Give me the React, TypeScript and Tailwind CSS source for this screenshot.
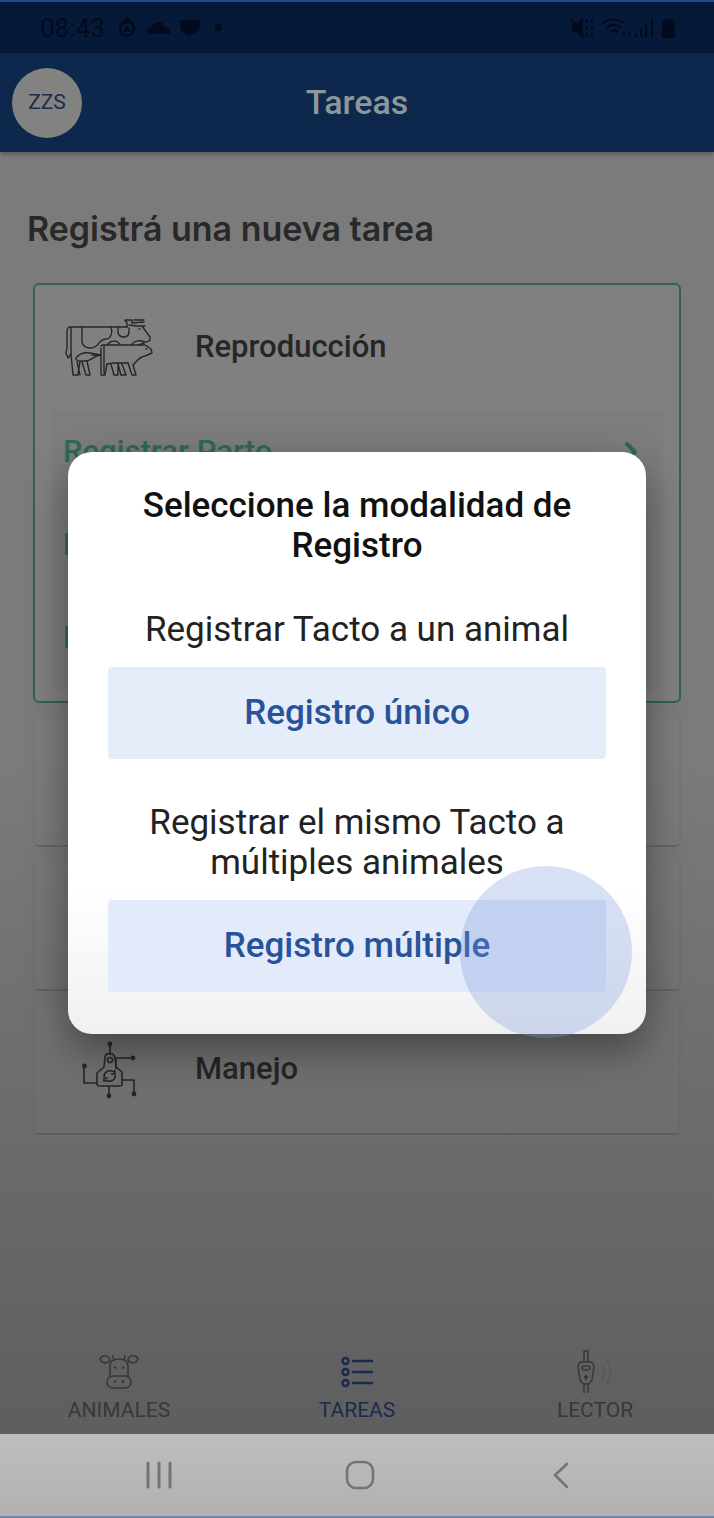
import type { ReactNode } from "react";
import { ChevronRight } from "lucide-react";

function CowIcon() {
  return (
    <svg viewBox="0 0 90 60" className="h-[60px] w-[90px]" fill="none" stroke="currentColor" strokeWidth="1.4" strokeLinejoin="round" strokeLinecap="round">
      <path d="M62 9H6c-3 0-4 1-4 4v17l-1 5 2 5 3-4V10" />
      <path d="M6 36l2 21h5l2-14M17 44l4 13h4l-3-14M12 44l3 13" />
      <path d="M17 9v8c0 5-2 12 8 13 10 0 7-8 16-9 5 0 7-7 5-12" />
      <path d="M11 40c3-4 8-6 14-5l10 2c-7 1-8 6-15 6-5 0-9 1-9-3z" />
      <path d="M53 9c0 5-1 9 5 10 7 0 6-5 6-9M62 9v-4l-2-3h7v3l12-1M64 7l8 1h8M69 2h10M77 8l5 7 3 4c1 4-2 5-5 5-6-2-10-2-14 3M74 11h1" />
      <path d="M43 26c3-4 10-4 12 1M36 30V57h4l2-11M39 28v27M36 28c0-1 1-1 3-1h41l6 4 1 4-7 3c-6 1-7 4-12 9l3 10h-4l-4-12M35 37h-8" />
      <path d="M42 46l7-1h14M46 46l3 11h4V47M53 46l3 11h5l-4-11M74 27l5-2M81 31h1" />
    </svg>
  );
}

function TagIcon() {
  return (
    <svg viewBox="0 0 56 58" className="h-[58px] w-[56px]" fill="none" stroke="currentColor" strokeWidth="1.6" strokeLinejoin="round">
      <path d="M15 43V32l7-6 1-9c0-6 9-6 10 0l1 9 6 5v12c0 2-1 2-3 2H18c-2 0-3 0-3-2z" />
      <circle cx="28" cy="19" r="2.5" />
      <path d="M28 14V3M27 45v9M15 42H2V26M34 28V17h15M40 39h12v14" />
      <path d="M22 36c0-5 5-8 10-5M33 29v4h-4M33 34c1 5-5 8-10 5M22 41v-4h4" />
      <g fill="currentColor" stroke="none">
        <circle cx="28" cy="3" r="2.4" />
        <circle cx="27" cy="55" r="2.4" />
        <circle cx="2.5" cy="25" r="2.4" />
        <circle cx="51" cy="17" r="2.4" />
        <circle cx="52" cy="53" r="2.4" />
      </g>
    </svg>
  );
}

function CowHeadIcon() {
  return (
    <svg viewBox="0 0 40 36" className="h-9 w-10" fill="none" stroke="currentColor" strokeWidth="1.6">
      <path d="M11 23V12c0-5 3-7 9-7s9 2 9 7v11" />
      <rect x="8" y="22" width="24" height="12" rx="6" />
      <path d="M15 6c-1-1-1-3-1-5M25 6c1-1 1-3 1-5" />
      <path d="M11 6C10 1 3 0 1 5c2 5 8 5 10 1zM29 6c1-5 8-6 10-1-2 5-8 5-10 1z" />
      <g fill="currentColor" stroke="none">
        <circle cx="16" cy="13.500" r="1.3" />
        <circle cx="24" cy="13.500" r="1.3" />
        <circle cx="16" cy="27.500" r="1.3" />
        <circle cx="24" cy="27.500" r="1.3" />
      </g>
    </svg>
  );
}

function TasksIcon() {
  return (
    <svg viewBox="0 0 40 36" className="h-9 w-10" fill="none" stroke="currentColor" strokeWidth="2.4">
      {[7, 18, 29].map((y) => (
        <g key={y}>
          <circle cx="8.500" cy={y} r="3" />
          <path d={`M16 ${y}h19`} strokeLinecap="round" />
        </g>
      ))}
    </svg>
  );
}

function ReaderIcon() {
  return (
    <svg viewBox="0 0 40 44" className="h-11 w-10" fill="none" stroke="currentColor" strokeWidth="1.5">
      <path d="M9 12V1h4v11M9 33v10M13 33v10M5 12h12l2 4-2 14-3 4H8l-3-4-2-14z" strokeLinejoin="round" />
      <rect x="7" y="16" width="8" height="4" rx="2" />
      <path d="M9 27h4M11 25v5" strokeWidth="2" />
      <path d="M23 20v5M27 14c3 4 3 12 0 17M31 10c6 7 6 18 0 25" opacity="0.18" />
    </svg>
  );
}

function StatusBar() {
  return (
    <div className="flex h-[53px] items-center justify-between border-t-2 border-[#1b4d8f] bg-[#061938] pr-9 pl-10 text-[#020b1e]">
      <div className="flex items-center gap-2">
        <span className="text-[26px] leading-8">08:43</span>
        <svg viewBox="0 0 112 22" className="h-[22px] w-28" fill="currentColor">
          <circle cx="14" cy="12" r="7" fill="none" stroke="currentColor" strokeWidth="2.500" />
          <path d="M7 6l7-6 7 6M10 15l4-7 4 7z" />
          <path d="M35 17c-3-6 1-7 4-7 3-7 11-6 13 0 5 0 6 5 5 7zM67 3h20v9l-5 5h-3l-3 3-2-3h-2l-5-5z" />
          <rect x="102" y="7" width="7" height="7" rx="2" />
        </svg>
      </div>
      <svg viewBox="0 0 110 24" className="h-6 w-[110px]" fill="currentColor">
        <path d="M4 8h4l7-6v20l-7-6H4z" />
        <path d="M3 3l13 18M19 3v4M19 10v4M19 17v4M24 3v4M24 10v4M24 17v4" stroke="currentColor" strokeWidth="2" />
        <path d="M34 8c6-6 17-6 23 0M38 12c4-4 11-4 15 0M42 16c2-2 6-2 8 0M56 15v5M61 15v5M68 21v-4M73 21v-8M78 21V8M84 21V3" fill="none" stroke="currentColor" strokeWidth="2" />
        <path d="M97 3h7v2h3v17H94V5h3z" />
      </svg>
    </div>
  );
}

function TaskCard({ icon, title, active, children }: { icon?: ReactNode; title?: string; active?: boolean; children?: ReactNode }) {
  return (
    <section className={`rounded-md border-2 ${active ? "border-[#2f6358] bg-white/4" : "border-x-black/5 border-t-transparent border-b-black/15 bg-white/2"}`}>
      <div className="flex h-[126px] items-center pl-[30px] text-[#262626]">
        <div className="flex w-[90px] justify-center">{icon}</div>
        {title && <h2 className="pb-0.5 pl-10 text-[31px] leading-10 font-medium">{title}</h2>}
      </div>
      {children}
    </section>
  );
}

const registros = ["Registrar Parto", "Registrar Tacto", "Registrar Celo"];

const tabs = [
  { label: "ANIMALES", icon: <CowHeadIcon />, color: "text-[#363839]" },
  { label: "TAREAS", icon: <TasksIcon />, color: "text-[#1b2b50]" },
  { label: "LECTOR", icon: <ReaderIcon />, color: "text-[#363839]" },
];

function Modal() {
  return (
    <div className="absolute inset-0 flex items-center justify-center px-[68px] pb-8">
      <div
        role="dialog"
        aria-modal="true"
        aria-labelledby="modal-title"
        className="relative flex w-full flex-col rounded-3xl bg-linear-to-b from-white from-75% to-[#f0f0f0] px-10 pt-[34px] pb-[42px] text-center text-[35px] leading-10 text-[#222] shadow-[0_16px_40px_rgba(0,0,0,0.4)]"
      >
        <h2 id="modal-title" className="font-medium text-[#111]">Seleccione la modalidad de Registro</h2>
        <p className="mt-11">Registrar Tacto a un animal</p>
        <button type="button" className="mt-[17px] h-[92px] rounded-sm bg-[#e5ecfa] font-medium text-[#28539b]">
          Registro único
        </button>
        <p className="mt-11">Registrar el mismo Tacto a múltiples animales</p>
        <button type="button" className="mt-[17px] h-[92px] rounded-sm bg-[#e3eafa] font-medium text-[#28539b]">
          Registro múltiple
        </button>
        {/* touch ripple */}
        <span className="pointer-events-none absolute right-[14px] -bottom-1 size-[172px] rounded-full bg-[#7b97dc]/30" />
      </div>
    </div>
  );
}

export default function App() {
  return (
    <div className="relative flex min-h-screen flex-col bg-linear-to-b from-[#7b7b7b] from-50% to-[#5e5e5e] to-95% font-['Roboto',sans-serif]">
      <StatusBar />
      <header className="relative flex h-[99px] items-center justify-center bg-[#0e274c] pb-0.5 shadow-[0_2px_4px_rgba(0,0,0,0.3)]">
        <button type="button" className="absolute top-[15px] left-3 size-[70px] rounded-full bg-[#828380] text-[21px] text-[#1d2a4c]">
          ZZS
        </button>
        <h1 className="text-[34px] leading-10 font-medium text-[#8c979d]">Tareas</h1>
      </header>

      <main className="flex-1 px-[33px] pt-[57px]">
        <h2 className="-ml-[6px] font-['Inter',sans-serif] text-[34px] leading-10 font-semibold text-[#292929]">Registrá una nueva tarea</h2>
        <div className="mt-[34px] flex flex-col gap-[14px]">
          <TaskCard icon={<CowIcon />} title="Reproducción" active>
            <ul className="mx-4 mb-[11px] bg-black/2 px-3">
              {registros.map((label) => (
                <li key={label}>
                  <a href="#" className="flex h-[93px] items-center justify-between pr-1 pb-3 text-[31px] leading-10 font-medium text-[#2d695a]">
                    {label}
                    <ChevronRight className="size-8" strokeWidth={3} />
                  </a>
                </li>
              ))}
            </ul>
          </TaskCard>
          <TaskCard />
          <TaskCard />
          <TaskCard icon={<TagIcon />} title="Manejo" />
        </div>
      </main>

      <nav className="grid grid-cols-3 pt-3 pb-[10px]">
        {tabs.map(({ label, icon, color }) => (
          <a key={label} href="#" className={`flex flex-col items-center text-[21px] leading-7 ${color}`}>
            <span className="flex h-12 items-center">{icon}</span>
            {label}
          </a>
        ))}
      </nav>

      <div className="grid h-[84px] grid-cols-3 items-center justify-items-center border-b-2 border-[#7087a8] bg-linear-to-b from-[#bebebe] to-[#b1b1b1] pr-[52px] pl-[58px] text-[#747474]">
        <button type="button" aria-label="Recientes">
          <svg viewBox="0 0 30 30" className="size-[30px]" stroke="currentColor" strokeWidth="3" strokeLinecap="round">
            <path d="M4 3v24M15 3v24M26 3v24" />
          </svg>
        </button>
        <button type="button" aria-label="Inicio">
          <svg viewBox="0 0 30 30" className="size-[30px]" fill="none" stroke="currentColor" strokeWidth="2.6">
            <rect x="2" y="2" width="26" height="26" rx="9" />
          </svg>
        </button>
        <button type="button" aria-label="Atrás">
          <svg viewBox="0 0 30 30" className="size-[30px]" fill="none" stroke="currentColor" strokeWidth="2.6" strokeLinecap="round" strokeLinejoin="round">
            <path d="M21 4L9 15l12 12" />
          </svg>
        </button>
      </div>

      <Modal />
    </div>
  );
}
